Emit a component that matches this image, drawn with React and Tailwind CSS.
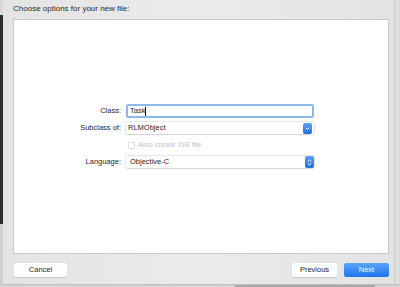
import React from "react";

function Chevron({ double }) {
  return (
    <svg width="7" height="9" viewBox="0 0 7 9" className="block">
      {double ? (
        <>
          <path d="M1.8 3.6 L3.5 2 L5.2 3.6" fill="none" stroke="white" strokeWidth="1" />
          <path d="M1.8 5.4 L3.5 7 L5.2 5.4" fill="none" stroke="white" strokeWidth="1" />
        </>
      ) : (
        <path d="M1.8 3.8 L3.5 5.5 L5.2 3.8" fill="none" stroke="white" strokeWidth="1" />
      )}
    </svg>
  );
}

export default function App() {
  const font = { fontFamily: '"Liberation Sans", Arial, sans-serif' };
  return (
    <div
      className="w-[400px] h-[287px] flex flex-col overflow-hidden bg-[#e6e6e6] text-[#262626]"
      style={font}
    >
      <div className="flex flex-1 min-h-0">
        {/* left edge strip */}
        <div className="w-[3px] flex flex-col">
          <div className="h-[15px] bg-[#d8d8d8]" />
          <div className="flex-1 bg-[#2f2f2f]" />
          <div className="h-[60px] bg-[#cfcfcf]" />
        </div>
        <div className="flex-1 flex flex-col pl-[10px] pr-[5px] bg-gradient-to-r from-[#e4e4e4] via-[#ebebeb] to-[#e3e3e3]">
          <div className="h-[19px] pt-[4px] text-[8px] leading-[10px] text-[#2a2a2a]">
            Choose options for your new file:
          </div>
          <div className="h-[235px] bg-white border border-[#c9c9c9] flex flex-col justify-center">
            <div className="grid grid-cols-[108px_188px] gap-x-[4px] items-center pb-[1px] text-[7.5px]">
              <div className="text-right pr-[1px]">Class:</div>
              <div className="h-[14px] border-[2px] border-[#8fb8ea] rounded-[2px] flex items-center pl-[2px] bg-white">
                <span>Task</span>
                <span className="w-px h-[9px] bg-black" />
              </div>

              <div className="text-right pr-[1px] mt-[4px]">Subclass of:</div>
              <div className="mt-[4px] h-[12px] flex items-center bg-white rounded-[2px] shadow-[0_0_0_0.5px_#d0d0d0,0_1px_1px_#dcdcdc] pr-[2px]">
                <span className="pl-[2px] flex-1">RLMObject</span>
                <span className="w-[9px] h-[11px] rounded-[2px] bg-gradient-to-b from-[#5aa1f5] to-[#1e6fdc] flex items-center justify-center">
                  <Chevron />
                </span>
              </div>

              <div className="mt-[6px]" />
              <div className="mt-[6px] flex items-center gap-[3px] pl-[2px] text-[#c4c4c4] h-[10px]">
                <span className="w-[7px] h-[7px] border border-[#e0e0e0] rounded-[1px] bg-white" />
                <span>Also create XIB file</span>
              </div>

              <div className="text-right pr-[1px] mt-[6px]">Language:</div>
              <div className="mt-[6px] h-[12px] flex items-center bg-white rounded-[2px] shadow-[0_0_0_0.5px_#d0d0d0,0_1px_1px_#dcdcdc]">
                <span className="pl-[4px] flex-1">Objective-C</span>
                <span className="w-[9px] h-[12px] rounded-[2px] bg-gradient-to-b from-[#5aa1f5] to-[#1e6fdc] flex items-center justify-center">
                  <Chevron double />
                </span>
              </div>
            </div>
          </div>
          <div className="flex items-center pt-[9px] text-[7.5px]">
            <div className="ml-[1px] w-[53px] h-[14px] bg-white rounded-[2px] shadow-[0_0.5px_1px_#c8c8c8] flex items-center justify-center">
              Cancel
            </div>
            <div className="flex-1" />
            <div className="w-[45px] h-[14px] bg-white rounded-[2px] shadow-[0_0.5px_1px_#c8c8c8] flex items-center justify-center">
              Previous
            </div>
            <div className="ml-[7px] w-[45px] h-[14px] rounded-[2px] bg-gradient-to-b from-[#5aa4f8] to-[#1f73ea] text-white flex items-center justify-center">
              Next
            </div>
          </div>
        </div>
        <div className="w-[6px] bg-[#dedede] border-l border-[#cdcdcd]" />
      </div>
      <div className="h-[3px] flex bg-[#d3d3d3] border-t border-[#bdbdbd]">
        <div className="w-[235px]" />
        <div className="w-[140px] bg-[#8a8a8a] opacity-60" />
      </div>
    </div>
  );
}
